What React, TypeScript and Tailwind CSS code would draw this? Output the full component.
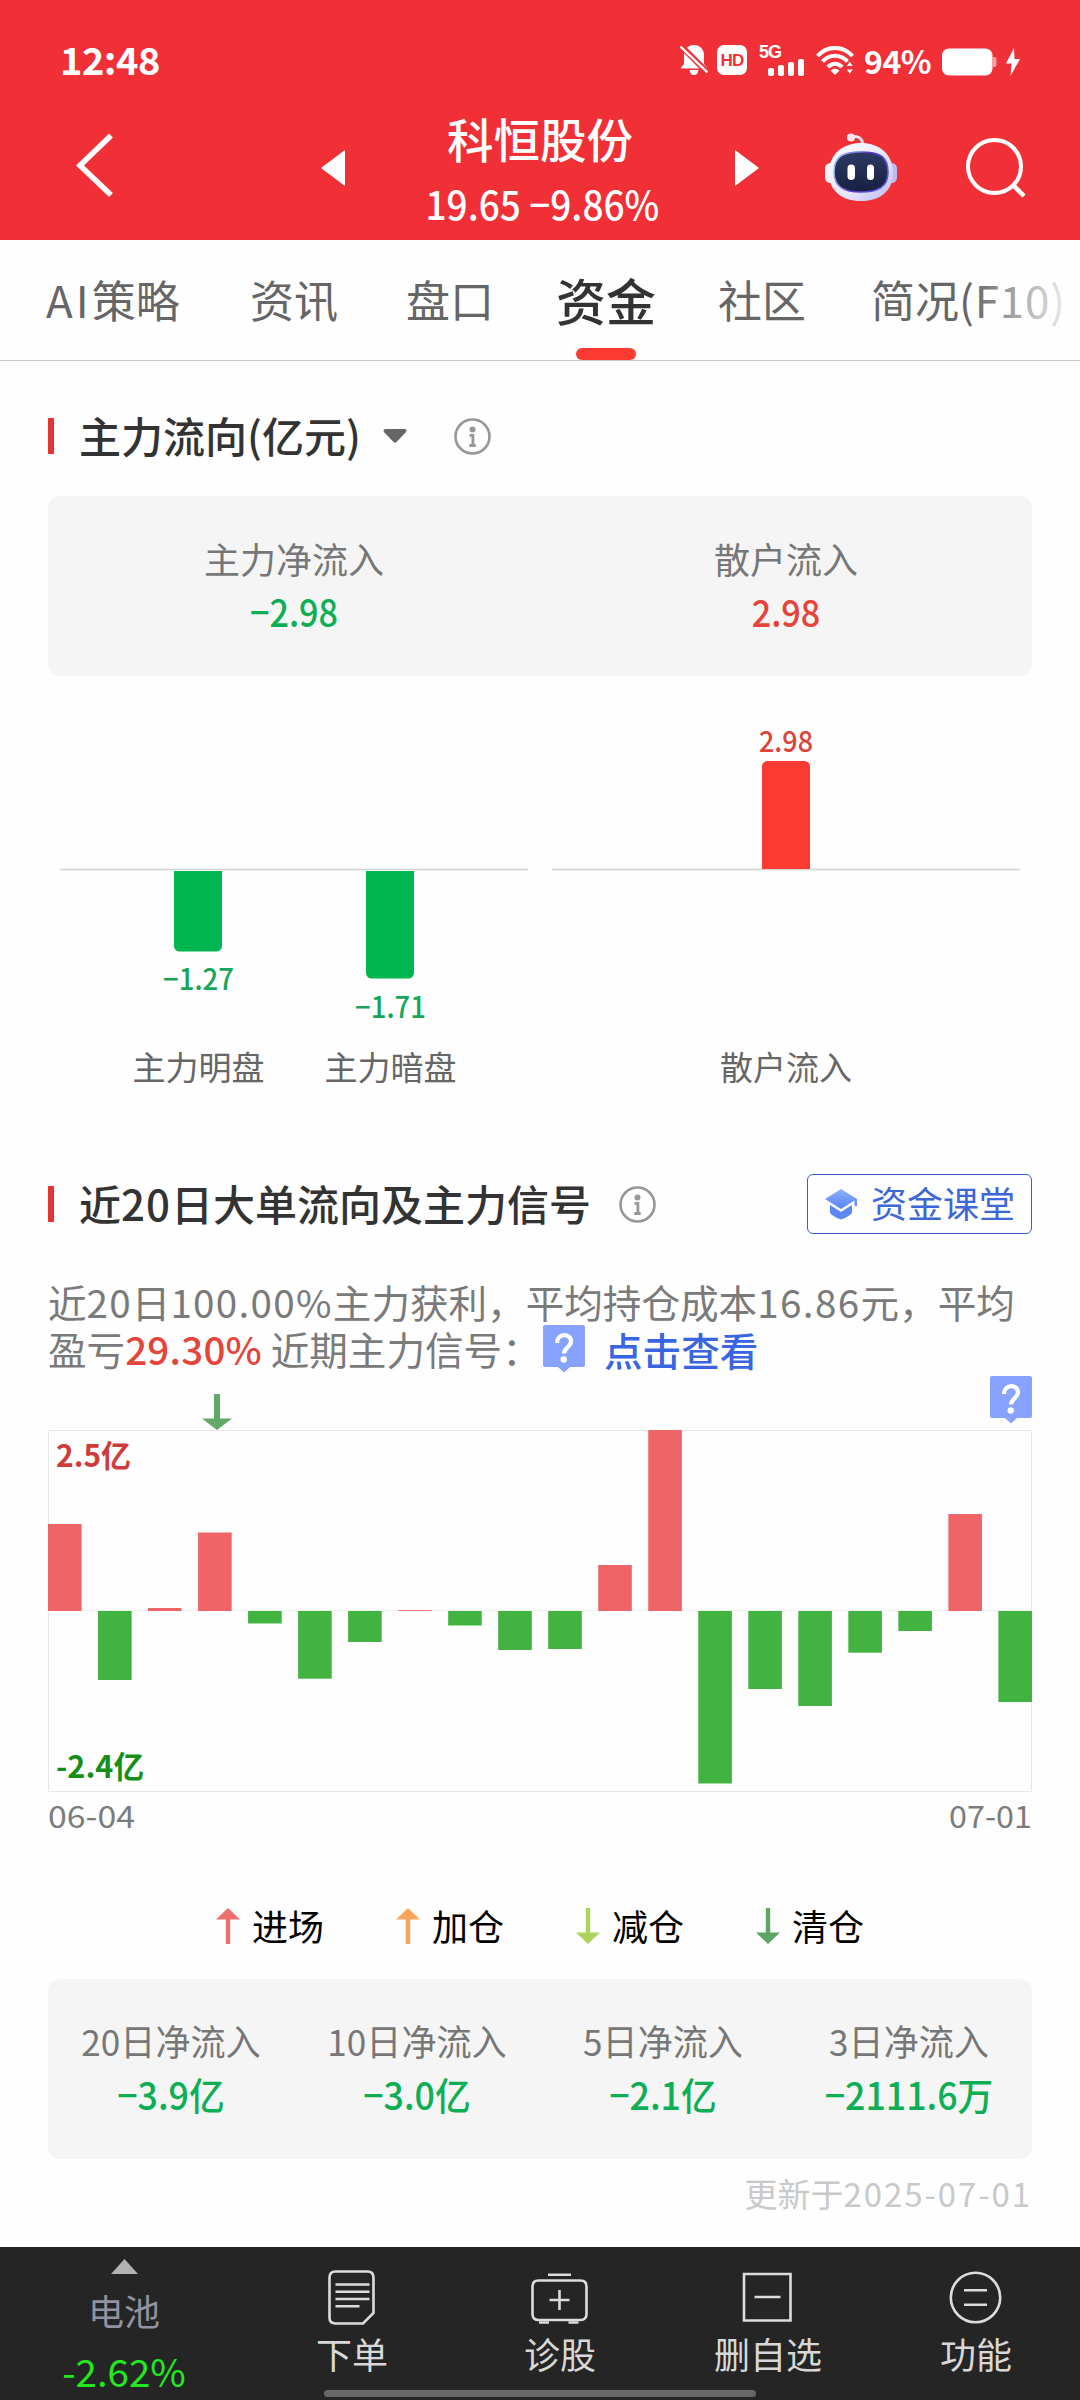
import type { ReactNode } from "react";

const flowBars: { up: boolean; h: number }[] = [
  { up: true, h: 87 },
  { up: false, h: 69 },
  { up: true, h: 3 },
  { up: true, h: 78.5 },
  { up: false, h: 12.5 },
  { up: false, h: 67.7 },
  { up: false, h: 31 },
  { up: true, h: 0.8 },
  { up: false, h: 14.5 },
  { up: false, h: 39 },
  { up: false, h: 38 },
  { up: true, h: 46 },
  { up: true, h: 181 },
  { up: false, h: 172.5 },
  { up: false, h: 78 },
  { up: false, h: 95 },
  { up: false, h: 41.7 },
  { up: false, h: 20 },
  { up: true, h: 97 },
  { up: false, h: 91 },
];

const summary = [
  { label: "20日净流入", value: "−3.9", unit: "亿" },
  { label: "10日净流入", value: "−3.0", unit: "亿" },
  { label: "5日净流入", value: "−2.1", unit: "亿" },
  { label: "3日净流入", value: "−2111.6", unit: "万" },
];

function StatusBar() {
  return (
    <div className="flex h-[108px] items-center pt-3 pl-[60px] text-white">
      <span className="mt-[-3px] w-[620px] text-[38px] leading-[40px] font-bold tracking-[-0.4px]">12:48</span>
      <svg className="h-[32px] w-[28px]" viewBox="0 0 28 32" fill="none">
        <path
          d="M14 1c-6 0-10 4.500-10 10v9l-3 3.500v1h26v-1L24 20v-9C24 5.500 20 1 14 1ZM9.500 26h9c-1 4-2 5-4.500 5s-3.500-1-4.500-5Z"
          fill="#fff"
        />
        <path d="M0 1l28 28" stroke="#f12f37" strokeWidth="6" />
        <path d="M0.500 2.500l27 26" stroke="#fff" strokeWidth="2.400" />
      </svg>
      <span className="ml-[9px] flex h-[30px] w-[30px] items-center justify-center rounded-[7px] bg-white font-['Liberation_Sans'] text-[17px] leading-none font-bold tracking-[-0.8px] text-[#f12f37]">
        HD
      </span>
      <div className="ml-3 flex h-[32px] w-[45px] flex-col">
        <span className="h-[15px] font-['Liberation_Sans'] text-[18px] leading-[17px] font-bold tracking-[-1px]">5G</span>
        <svg className="ml-[9px] h-[17px] w-[36px]" viewBox="0 0 36 17" fill="#fff">
          <rect x="0" y="9" width="6" height="8" rx="2" />
          <rect x="10" y="6" width="6" height="11" rx="2" />
          <rect x="20" y="3" width="6" height="14" rx="2" />
          <rect x="30" y="0" width="6" height="17" rx="2" />
        </svg>
      </div>
      <svg className="ml-3 h-[29px] w-[38px]" viewBox="0 0 38 29" fill="none" stroke="#fff" strokeWidth="4">
        <path d="M1.500 10C11.500-.8 26.500-.8 36.500 10" />
        <path d="M6.500 15.500c7.500-7.600 17.500-7.600 25 0" />
        <path d="M11.800 21c4.500-4.500 10-4.500 14.400 0" />
        <path d="M14.500 24.500c3-2.500 6-2.500 9 0L19 29Z" fill="#fff" stroke="none" />
        <path d="M30 20.500l3.800-5.500 3.800 5.500ZM30 23l3.800 5.500 3.800-5.500Z" fill="#fff" stroke="#f12f37" strokeWidth="1" />
      </svg>
      <span className="ml-[10px] w-[78px] text-[32px] leading-[34px] font-bold tracking-[-0.5px]">94%</span>
      <svg className="mt-[3px] h-[28px] w-[55px]" viewBox="0 0 55 28">
        <rect x="0" y="0.500" width="50.500" height="27" rx="7" fill="#fff" />
        <path d="M51 9h1.500a2 2 0 0 1 2 2v6a2 2 0 0 1-2 2H51Z" fill="#f8a0a3" />
      </svg>
      <svg className="mt-[3px] ml-[8px] h-[28px] w-[16px]" viewBox="0 0 16 28" fill="#fff">
        <path d="M9 0L1 15.500h5.500L5.500 28 15 11H9.500Z" />
      </svg>
    </div>
  );
}

function Robot() {
  return (
    <svg className="mt-[23px] ml-[66px] h-[70px] w-[72px]" viewBox="0 0 72 70">
      <defs>
        <linearGradient id="shell" x1="0" y1="0" x2="1" y2="1">
          <stop offset="0" stopColor="#ffffff" />
          <stop offset="0.600" stopColor="#e6e4fb" />
          <stop offset="1" stopColor="#b9b9ee" />
        </linearGradient>
        <linearGradient id="rim" x1="0" y1="0" x2="1" y2="0.300">
          <stop offset="0" stopColor="#a9d8f2" />
          <stop offset="0.600" stopColor="#5a34c9" />
          <stop offset="1" stopColor="#5b55d8" />
        </linearGradient>
        <linearGradient id="face" x1="0" y1="0" x2="0" y2="1">
          <stop offset="0" stopColor="#2d3a62" />
          <stop offset="1" stopColor="#172042" />
        </linearGradient>
      </defs>
      <path d="M26 6c7-2 11 1 12 8" fill="none" stroke="#f5e4f0" strokeWidth="3" />
      <circle cx="26" cy="6.500" r="4" fill="#f8e6ee" />
      <rect x="0" y="32" width="12" height="20" rx="5.500" fill="#eff0fd" />
      <rect x="60" y="32" width="12" height="20" rx="5.500" fill="#bebdf0" />
      <path
        d="M36 12C53 12 68 22 68 42c0 18-13 28-32 28S4 60 4 42c0-20 15-30 32-30Z"
        fill="url(#shell)"
      />
      <path
        d="M36 21c18 0 27 4 27 20 0 15-10 20-27 20S9 56 9 41c0-16 9-20 27-20Z"
        fill="url(#face)"
        stroke="url(#rim)"
        strokeWidth="1.600"
      />
      <rect x="22.500" y="33.500" width="7.500" height="15.500" rx="3.750" fill="#fff" />
      <rect x="42" y="33.500" width="7" height="15.500" rx="3.500" fill="#fff" />
    </svg>
  );
}

function TitleBar() {
  return (
    <div className="flex h-[132px] items-start pl-[76px] text-white">
      <svg className="mt-[25px] h-[65px] w-[38px]" viewBox="0 0 38 65" fill="none">
        <path d="M35 2.500L4 32.500l31 29.500" stroke="#fff" strokeWidth="5.500" />
      </svg>
      <svg className="mt-[42px] ml-[207px] h-[36px] w-[24px]" viewBox="0 0 24 36" fill="#fff">
        <path d="M24 0v36L0 18Z" />
      </svg>
      <div className="flex w-[390px] flex-col items-center">
        <h1 className="mt-[-3px] h-[65px] text-[46.500px] leading-[65px] font-medium">科恒股份</h1>
        <div className="mt-px h-[65px] origin-center translate-x-[2px] scale-x-[0.925] text-[40px] leading-[65px] font-medium whitespace-pre">
          19.65 −9.86%
        </div>
      </div>
      <svg className="mt-[42px] h-[36px] w-[24px]" viewBox="0 0 24 36" fill="#fff">
        <path d="M0 0v36l24-18Z" />
      </svg>
      <Robot />
      <svg className="mt-[29px] ml-[68px] h-[62px] w-[62px]" viewBox="0 0 62 62" fill="none" stroke="#fff" strokeWidth="4">
        <circle cx="29.500" cy="29.500" r="26.500" />
        <path d="M49 49l10 10" strokeWidth="4.500" />
      </svg>
    </div>
  );
}

function Tabs() {
  return (
    <nav className="relative flex h-[121px] border-b border-[#c9c7c7] pl-[46px] text-[44px] leading-[118px] whitespace-nowrap text-[#666]">
      <span className="w-[204px]">
        <span className="tracking-[3px]">AI</span>策略
      </span>
      <span className="w-[156px]">资讯</span>
      <span className="w-[150px]">盘口</span>
      <span className="relative w-[162px] text-[50px] font-medium text-[#333]">
        资金
        <i className="absolute top-[108px] left-[20px] h-[12px] w-[60px] rounded-full bg-[#fb3b31]" />
      </span>
      <span className="w-[153px]">社区</span>
      <span>
        简况<span className="tracking-[0.800px]">(F10)</span>
      </span>
      <div className="absolute top-0 right-0 h-[119px] w-[110px] bg-linear-to-r from-[#fefefe00] to-[#fefefe]" />
    </nav>
  );
}

function InfoIcon() {
  return (
    <svg className="h-[37px] w-[37px]" viewBox="0 0 37 37" fill="none" stroke="#979797">
      <circle cx="18.500" cy="18.500" r="17" strokeWidth="2.600" />
      <circle cx="18.500" cy="11.500" r="3" fill="#979797" stroke="none" />
      <path d="M15.500 17.300h3.400v10M15.300 27.500h6.400" strokeWidth="2.800" />
    </svg>
  );
}

function SectionTitle({ children }: { children: ReactNode }) {
  return (
    <>
      <span className="h-[36px] w-[6px] bg-[#e13434]" />
      <h2 className="mt-[-2px] ml-[25px] text-[42px] leading-[60px] font-medium text-[#333]">{children}</h2>
    </>
  );
}

function MainFlowChart() {
  return (
    <div className="mt-[34px] flex h-[410px] text-[#666]">
      <svg className="h-[410px] w-[984px]" viewBox="48 710 984 410">
        <path d="M60 869.500H528M552 869.500H1020" stroke="#d3d3d3" strokeWidth="1.300" />
        <path d="M174 871h48v75a5.500 5.500 0 0 1-5.500 5.500h-37a5.500 5.500 0 0 1-5.500-5.500Z" fill="#00b650" />
        <path d="M366 871h48v102a5.500 5.500 0 0 1-5.500 5.500h-37a5.500 5.500 0 0 1-5.500-5.500Z" fill="#00b650" />
        <path d="M762 869v-102.500a5.500 5.500 0 0 1 5.500-5.500h37a5.500 5.500 0 0 1 5.500 5.500V869Z" fill="#fb3b31" />
        <g fontSize="29" fontWeight="500" textAnchor="middle">
          <text x="198.500" y="989.500" fill="#17a659" textLength="71" lengthAdjust="spacingAndGlyphs">−1.27</text>
          <text x="390.500" y="1017.500" fill="#17a659" textLength="71" lengthAdjust="spacingAndGlyphs">−1.71</text>
          <text x="786" y="751.500" fill="#dc4339" textLength="54" lengthAdjust="spacingAndGlyphs">2.98</text>
        </g>
        <g fontSize="33" textAnchor="middle" fill="#666">
          <text x="198.500" y="1080">主力明盘</text>
          <text x="390.500" y="1080">主力暗盘</text>
          <text x="786" y="1080">散户流入</text>
        </g>
      </svg>
    </div>
  );
}

function QuestionBadge() {
  return (
    <svg className="h-[48px] w-[42px] shrink-0" viewBox="0 0 42 48" fill="none">
      <path d="M2 0h38a2 2 0 0 1 2 2v38a2 2 0 0 1-2 2H27l-6 5.500L15 42H2a2 2 0 0 1-2-2V2a2 2 0 0 1 2-2Z" fill="#87a2ff" />
      <path d="M14 18C14 7.500 28 8 28 16.500c0 5-7 6.500-7 12" stroke="#fff" strokeWidth="4.200" />
      <circle cx="20.700" cy="34.500" r="3.200" fill="#fff" />
    </svg>
  );
}

function SignalArrow({ color, up = false }: { color: string; up?: boolean }) {
  return (
    <svg className="h-[36px] w-[24px]" viewBox="0 0 24 36" fill={color}>
      {up ? <path d="M12 0l12 11.500h-9.800V36H9.800V11.500H0Z" /> : <path d="M12 36l12-11.500h-9.800V0H9.800v24.500H0Z" />}
    </svg>
  );
}

function FlowChart() {
  return (
    <svg className="block h-[474px] w-[984px] overflow-visible" viewBox="48 1376 984 474">
      <path d="M214 1394h6v24.500h12l-15 11.500-15-11.500h12Z" fill="#62a869" />
      <path d="M48.500 1430.500h983v361h-983Z" fill="none" stroke="#e7e7e7" />
      <path d="M48.500 1610.500h983" stroke="#f1f1f1" />
      {flowBars.map((b, i) => (
        <rect
          key={i}
          x={48 + i * 50.02}
          y={b.up ? 1611 - b.h : 1611}
          width="33.600"
          height={b.h}
          fill={b.up ? "#ef6567" : "#42b340"}
        />
      ))}
      <g fontSize="30.500" fontWeight="600">
        <text x="56" y="1467" fill="#cf3b3a" textLength="75" lengthAdjust="spacingAndGlyphs">2.5亿</text>
        <text x="56" y="1778" fill="#168f18" textLength="88" lengthAdjust="spacingAndGlyphs">-2.4亿</text>
      </g>
      <g fontSize="30.500" fill="#7c7c7c">
        <text x="48" y="1828" textLength="87" lengthAdjust="spacingAndGlyphs">06-04</text>
        <text x="1032" y="1828" textAnchor="end" textLength="83" lengthAdjust="spacingAndGlyphs">07-01</text>
      </g>
    </svg>
  );
}

const legend = [
  { name: "进场", color: "#ef6e6e", up: true },
  { name: "加仓", color: "#fba55c", up: true },
  { name: "减仓", color: "#acd35b", up: false },
  { name: "清仓", color: "#5ca564", up: false },
];

function NavItem({ icon, label }: { icon: ReactNode; label: string }) {
  return (
    <div className="flex w-[208px] flex-col items-center">
      <svg className="mt-[20px] h-[60px] w-[64px]" viewBox="0 0 64 60" fill="none" stroke="#dcdcdc" strokeWidth="2.600">
        {icon}
      </svg>
      <span className="mt-[3px] text-[36px] leading-[46px] text-[#d8d8d8]">{label}</span>
    </div>
  );
}

function BottomNav() {
  return (
    <footer className="relative flex h-[153px] bg-[#252525]">
      <div className="flex w-[248px] flex-col items-center">
        <svg className="mt-[12px] h-[15px] w-[27px]" viewBox="0 0 27 15" fill="#b2b2b2">
          <path d="M13.500 0L27 15H0Z" />
        </svg>
        <span className="mt-[13px] text-[36px] leading-[46px] text-[#9292a0]">电池</span>
        <span className="mt-[14px] text-[38.500px] leading-[46px] text-[#21e821]">-2.62%</span>
      </div>
      <NavItem
        label="下单"
        icon={
          <>
            <path d="M15.500 4.500h32q6 0 6 6V46L43 56.500H15.500q-6 0-6-6v-40q0-6 6-6Z" />
            <path d="M15.500 17.500h34M15.500 24.700h34M15.500 32h34M15.500 39.200h24" />
          </>
        }
      />
      <NavItem
        label="诊股"
        icon={
          <>
            <path d="M10.500 13.500h42q6 0 6 6V47q0 6-6 6h-42q-6 0-6-6V19.500q0-6 6-6Z" />
            <path d="M20 7.800h23M21.500 33h20M31.500 23v20M11 55.500h10M40.500 55.500h10" />
          </>
        }
      />
      <NavItem
        label="删自选"
        icon={<path d="M8 7h46.500v46.500H8ZM18.500 30h26" />}
      />
      <NavItem
        label="功能"
        icon={
          <>
            <circle cx="31.500" cy="30.500" r="24.700" />
            <path d="M20 23.300h23M20 37.800h23" />
          </>
        }
      />
      <div className="absolute bottom-[3px] left-[324px] h-[7px] w-[432px] rounded-full bg-[#686868]" />
    </footer>
  );
}

export default function App() {
  return (
    <div className="flex h-[2400px] w-[1080px] flex-col overflow-hidden bg-[#fefefe] font-['Noto_Sans_CJK_SC',sans-serif]">
      <header className="h-[240px] bg-[#f12f37]">
        <StatusBar />
        <TitleBar />
      </header>
      <Tabs />

      <main className="flex-1 px-12">
        <section>
          <div className="flex h-[135px] items-center pt-[15px]">
            <SectionTitle>主力流向(亿元)</SectionTitle>
            <svg className="ml-[22px] h-[14px] w-[24px]" viewBox="0 0 24 14" fill="#666">
              <path d="M2 0h20q2.500 1 .8 3.200L13.500 13q-1.500 1.400-3 0L1.200 3.200Q-.5 1 2 0Z" />
            </svg>
            <div className="ml-[47px]">
              <InfoIcon />
            </div>
          </div>
          <div className="grid h-[180px] grid-cols-2 rounded-[12px] bg-[#f5f5f5] pt-[35px] text-center">
            <div>
              <div className="text-[36px] leading-[54px] text-[#777]">主力净流入</div>
              <div className="mt-[-1px] scale-x-[0.9] text-[38px] leading-[54px] font-medium text-[#0eae55]">−2.98</div>
            </div>
            <div>
              <div className="text-[36px] leading-[54px] text-[#777]">散户流入</div>
              <div className="mt-[-1px] scale-x-[0.9] text-[38px] leading-[54px] font-medium text-[#e8433a]">2.98</div>
            </div>
          </div>
          <MainFlowChart />
        </section>

        <section>
          <div className="mt-[54px] flex h-[60px] items-center">
            <SectionTitle>
              近<span className="tracking-[1px]">20</span>日大单流向及主力信号
            </SectionTitle>
            <div className="ml-[28px]">
              <InfoIcon />
            </div>
            <div className="ml-auto flex h-[60px] w-[225px] items-center rounded-[6px] border border-[#3a5fc4] pl-4">
              <svg className="h-[32px] w-[34px]" viewBox="0 0 34 32">
                <defs>
                  <linearGradient id="cap" x1="0" y1="0" x2="0" y2="1">
                    <stop offset="0" stopColor="#8fb0fb" />
                    <stop offset="1" stopColor="#5684f5" />
                  </linearGradient>
                </defs>
                <path d="M17 1L1 11l16 10 13.500-8.500V18H33v-7Z" fill="url(#cap)" />
                <path d="M6 17l11 7 11-7v8q-4 4-11 6.500Q10 29 6 25Z" fill="#5b88f6" />
              </svg>
              <span className="mt-[-4px] ml-[13px] text-[36px] leading-[50px] text-[#3d66d6]">资金课堂</span>
            </div>
          </div>

          <div className="mt-[44px] text-[38.600px] leading-[46px] whitespace-pre text-[#7a7a7a]">
            <div className="h-[48px]">
              近<span className="tracking-[1.200px]">20</span>日<span className="tracking-[1.300px]">100.00%</span>
              主力获利，平均持仓成本<span className="tracking-[1.400px]">16.86</span>元，平均
            </div>
            <div className="flex h-[46px] items-center">
              <div className="mt-[-3px] w-[495px]">
                盈亏<span className="font-medium tracking-[0.200px] text-[#e3453b]">29.30%</span> 近期主力信号：
              </div>
              <QuestionBadge />
              <span className="mt-[-1px] ml-[19px] font-medium text-[#3965e2]">点击查看</span>
            </div>
          </div>

          <div className="relative mt-[4px]">
            <FlowChart />
            <div className="absolute top-0 right-0">
              <QuestionBadge />
            </div>
          </div>

          <div className="mt-[49px] flex h-[54px] pl-[168px] text-[36px] text-black">
            {legend.map((l) => (
              <div key={l.name} className="flex w-[180px] items-center">
                <SignalArrow color={l.color} up={l.up} />
                <span className="mt-[-3px] ml-[12px] leading-[50px]">{l.name}</span>
              </div>
            ))}
          </div>

          <div className="mt-[26px] grid h-[180px] grid-cols-4 rounded-[12px] bg-[#f5f5f5] pt-[34px] text-center">
            {summary.map((s) => (
              <div key={s.label}>
                <div className="scale-x-[0.975] text-[36px] leading-[54px] text-[#777]">{s.label}</div>
                <div className="text-[38px] leading-[54px] font-medium text-[#0eae55]">
                  <div className="scale-x-[0.94]">
                    {s.value}
                    {s.unit}
                  </div>
                </div>
              </div>
            ))}
          </div>

          <div className="mt-[9px] text-right text-[33px] leading-[50px] text-[#c9c9c9]">
            更新于<span className="tracking-[1.900px]">2025-07-01</span>
          </div>
        </section>
      </main>

      <BottomNav />
    </div>
  );
}
